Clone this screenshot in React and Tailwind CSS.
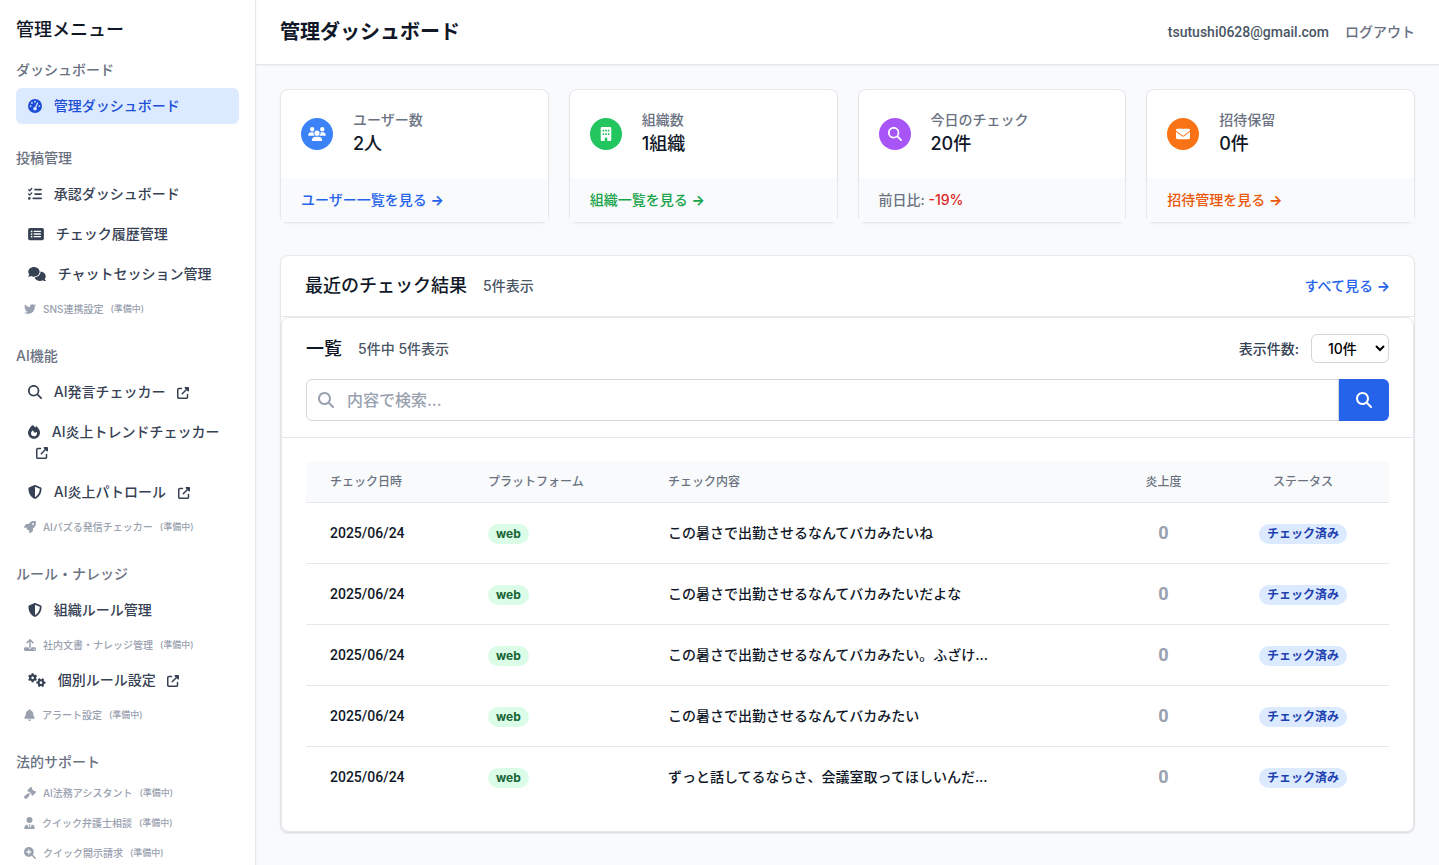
import { useState } from 'react';
import {
  FaBell, FaBuilding, FaComments, FaEnvelope, FaFire, FaGaugeHigh, FaGavel, FaGears,
  FaListCheck, FaMagnifyingGlass, FaMagnifyingGlassPlus, FaRectangleList, FaRocket, FaShieldHalved, FaTwitter,
  FaUpload, FaUpRightFromSquare, FaUserTie, FaUsers,
} from 'react-icons/fa6';

const MENU = [
  { title: 'ダッシュボード', items: [{ label: '管理ダッシュボード', icon: FaGaugeHigh, iconWidth: 'w-3.5', active: true }] },
  {
    title: '投稿管理',
    items: [
      { label: '承認ダッシュボード', icon: FaListCheck, iconWidth: 'w-3.5' },
      { label: 'チェック履歴管理', icon: FaRectangleList, iconWidth: 'w-4' },
      { label: 'チャットセッション管理', icon: FaComments, iconWidth: 'w-[18px]' },
      { label: 'SNS連携設定', icon: FaTwitter, iconWidth: 'w-3', soon: true },
    ],
  },
  {
    title: 'AI機能',
    items: [
      { label: 'AI発言チェッカー', icon: FaMagnifyingGlass, iconWidth: 'w-3.5', external: true },
      { label: 'AI炎上トレンドチェッカー', icon: FaFire, iconWidth: 'w-3', external: true },
      { label: 'AI炎上パトロール', icon: FaShieldHalved, iconWidth: 'w-3.5', external: true },
      { label: 'AIバズる発信チェッカー', icon: FaRocket, iconWidth: 'w-3', soon: true },
    ],
  },
  {
    title: 'ルール・ナレッジ',
    items: [
      { label: '組織ルール管理', icon: FaShieldHalved, iconWidth: 'w-3.5' },
      { label: '社内文書・ナレッジ管理', icon: FaUpload, iconWidth: 'w-3', soon: true },
      { label: '個別ルール設定', icon: FaGears, iconWidth: 'w-[18px]', external: true },
      { label: 'アラート設定', icon: FaBell, iconWidth: 'w-[11px]', soon: true },
    ],
  },
  {
    title: '法的サポート',
    items: [
      { label: 'AI法務アシスタント', icon: FaGavel, iconWidth: 'w-3', soon: true },
      { label: 'クイック弁護士相談', icon: FaUserTie, iconWidth: 'w-[11px]', soon: true },
      { label: 'クイック開示請求', icon: FaMagnifyingGlassPlus, iconWidth: 'w-3', soon: true },
    ],
  },
];

const STATS = [
  { label: 'ユーザー数', value: '2人', icon: FaUsers, circle: 'bg-[#3b82f6]', link: 'ユーザー一覧を見る', linkColor: 'text-[#2563eb]' },
  { label: '組織数', value: '1組織', icon: FaBuilding, circle: 'bg-[#22c55e]', link: '組織一覧を見る', linkColor: 'text-[#16a34a]' },
  { label: '今日のチェック', value: '20件', icon: FaMagnifyingGlass, circle: 'bg-[#a855f7]', diff: '-19%' },
  { label: '招待保留', value: '0件', icon: FaEnvelope, circle: 'bg-[#f97316]', link: '招待管理を見る', linkColor: 'text-[#ea580c]' },
];

const CHECKS = [
  { id: 1, date: '2025/06/24', platform: 'web', content: 'この暑さで出勤させるなんてバカみたいね', score: 0 },
  { id: 2, date: '2025/06/24', platform: 'web', content: 'この暑さで出勤させるなんてバカみたいだよな', score: 0 },
  { id: 3, date: '2025/06/24', platform: 'web', content: 'この暑さで出勤させるなんてバカみたい。ふざけ...', score: 0 },
  { id: 4, date: '2025/06/24', platform: 'web', content: 'この暑さで出勤させるなんてバカみたい', score: 0 },
  { id: 5, date: '2025/06/24', platform: 'web', content: 'ずっと話してるならさ、会議室取ってほしいんだ...', score: 0 },
];

function MenuItem({ item }) {
  const Icon = item.icon;
  if (item.soon) {
    return (
      <span className="flex items-center gap-[7px] px-2 py-1 text-[10px] leading-[18px] text-gray-400">
        <Icon className={`h-3 ${item.iconWidth}`}/>
        <span>{item.label}</span>
        <span className="text-[9px]">(準備中)</span>
      </span>
    );
  }
  return (
    <a href="#" className={`block rounded-md px-3 py-2 text-sm ${item.active ? 'bg-blue-100 text-[#1d4ed8]' : 'text-gray-700 hover:bg-gray-100'}`}>
      <Icon className={`inline-block h-3.5 mr-2 align-[-2px] ${item.iconWidth}`}/> {item.label}
      {item.external && <> <FaUpRightFromSquare className="inline-block size-3 ml-2 align-[-2px]"/></>}
    </a>
  );
}

function Sidebar() {
  return (
    <aside className="sticky top-0 h-screen w-64 shrink-0 overflow-y-auto border-r border-gray-200 bg-white p-4 shadow-xs [scrollbar-width:none]">
      <h2 className="text-lg leading-7 text-gray-900">管理メニュー</h2>
      <nav className="mt-4 space-y-6">
        {MENU.map(section => (
          <div key={section.title}>
            <h3 className="mb-2 text-sm text-gray-500">{section.title}</h3>
            <ul className="space-y-1">
              {section.items.map(item => <li key={item.label}><MenuItem item={item}/></li>)}
            </ul>
          </div>
        ))}
      </nav>
    </aside>
  );
}

function MoreLink({ className, children }) {
  return <a href="#" className={`text-sm ${className}`}>{children} <span className="font-bold">→</span></a>;
}

function StatCard({ stat }) {
  const Icon = stat.icon;
  return (
    <div className="rounded-lg border border-gray-200 bg-white shadow-xs">
      <div className="flex items-center gap-5 p-5">
        <div className={`flex size-8 items-center justify-center rounded-full text-white ${stat.circle}`}>
          <Icon className="h-3.5 w-[18px]"/>
        </div>
        <dl>
          <dt className="text-sm text-gray-500">{stat.label}</dt>
          <dd className="text-lg leading-7 text-gray-900">{stat.value}</dd>
        </dl>
      </div>
      <div className="bg-gray-50 px-5 py-3 text-sm">
        {stat.link
          ? <MoreLink className={stat.linkColor}>{stat.link}</MoreLink>
          : <span className="text-gray-500">前日比: <span className="text-[#dc2626]">{stat.diff}</span></span>}
      </div>
    </div>
  );
}

export default function App() {
  const [perPage, setPerPage] = useState('10');
  const [query, setQuery] = useState('');
  const rows = CHECKS.filter(c => c.content.includes(query)).slice(0, Number(perPage));

  return (
    <div className="flex min-h-screen bg-gray-50 font-['Inter','Noto_Sans_CJK_JP',sans-serif] font-medium">
      <Sidebar/>
      <div className="min-w-0 flex-1">
        <header className="flex h-[65px] items-center justify-between border-b border-gray-200 bg-white px-6 shadow-xs">
          <h1 className="text-xl font-bold text-gray-900">管理ダッシュボード</h1>
          <div className="flex items-center gap-4 text-sm">
            <span className="font-['Roboto',sans-serif] text-gray-600">tsutushi0628@gmail.com</span>
            <button className="text-gray-500 hover:text-gray-700">ログアウト</button>
          </div>
        </header>

        <main className="space-y-8 p-6">
          <div className="grid grid-cols-4 gap-5">
            {STATS.map(stat => <StatCard key={stat.label} stat={stat}/>)}
          </div>

          <section className="rounded-lg border border-gray-200 bg-white shadow-xs">
            <div className="flex items-center justify-between border-b border-gray-200 px-6 py-4">
              <div className="flex items-center gap-4">
                <h2 className="text-lg leading-7 text-gray-900">最近のチェック結果</h2>
                <span className="text-sm text-gray-600">5件表示</span>
              </div>
              <MoreLink className="text-[#2563eb]">すべて見る</MoreLink>
            </div>

            <div className="rounded-lg border border-gray-200 bg-white shadow-xs">
              <div className="space-y-4 border-b border-gray-200 px-6 py-4">
                <div className="flex items-center justify-between">
                  <div className="flex items-center gap-4">
                    <h3 className="text-lg leading-7 text-gray-900">一覧</h3>
                    <span className="text-sm text-gray-600">5件中 {rows.length}件表示</span>
                  </div>
                  <div className="flex items-center gap-3 text-sm">
                    <label htmlFor="per-page" className="text-gray-700">表示件数:</label>
                    <select id="per-page" value={perPage} onChange={e => setPerPage(e.target.value)} className="h-[29px] w-[78px] rounded-md border border-gray-300 bg-white pl-3 text-black">
                      <option value="10">10件</option><option value="20">20件</option><option value="50">50件</option>
                    </select>
                  </div>
                </div>
                <form className="flex" onSubmit={e => e.preventDefault()}>
                  <div className="relative flex-1">
                    <FaMagnifyingGlass size={16} className="absolute left-3 top-[13px] text-gray-400"/>
                    <input aria-label="検索" value={query} onChange={e => setQuery(e.target.value)} placeholder="内容で検索..." className="block w-full rounded-l-md border border-gray-300 bg-white py-2 pl-10 pr-3 text-base leading-6 placeholder:text-gray-400 focus:outline-none focus:ring-2 focus:ring-blue-500"/>
                  </div>
                  <button aria-label="検索する" className="flex w-[50px] items-center justify-center rounded-r-md bg-[#2563eb] text-white">
                    <FaMagnifyingGlass size={16}/>
                  </button>
                </form>
              </div>

              <div className="p-6">
                <table className="w-full table-fixed text-left text-sm">
                  <thead className="border-b border-gray-200 bg-gray-50 text-xs text-gray-500">
                    <tr>
                      <th className="w-[158px] px-6 py-3 font-medium">チェック日時</th>
                      <th className="w-[180px] px-6 py-3 font-medium">プラットフォーム</th>
                      <th className="px-6 py-3 font-medium">チェック内容</th>
                      <th className="w-[107px] px-6 py-3 text-center font-medium">炎上度</th>
                      <th className="w-[172px] px-6 py-3 text-center font-medium">ステータス</th>
                    </tr>
                  </thead>
                  <tbody className="divide-y divide-gray-200 text-gray-900">
                    {rows.map(c => (
                      <tr key={c.id}>
                        <td className="px-6 py-4 font-['Roboto',sans-serif]">{c.date}</td>
                        <td className="px-6 py-4"><span className="inline-flex rounded-full bg-green-100 px-2 text-xs leading-5 font-bold text-[#166534]">{c.platform}</span></td>
                        <td className="px-6 py-4"><div className="truncate">{c.content}</div></td>
                        <td className="px-6 py-4 text-center font-['Roboto',sans-serif] text-lg leading-7 font-bold text-gray-400">{c.score}</td>
                        <td className="px-6 py-4 text-center"><span className="inline-flex rounded-full bg-blue-100 px-2 text-xs leading-5 font-bold text-[#1e40af]">チェック済み</span></td>
                      </tr>
                    ))}
                  </tbody>
                </table>
              </div>
            </div>
          </section>
        </main>
      </div>
    </div>
  );
}
